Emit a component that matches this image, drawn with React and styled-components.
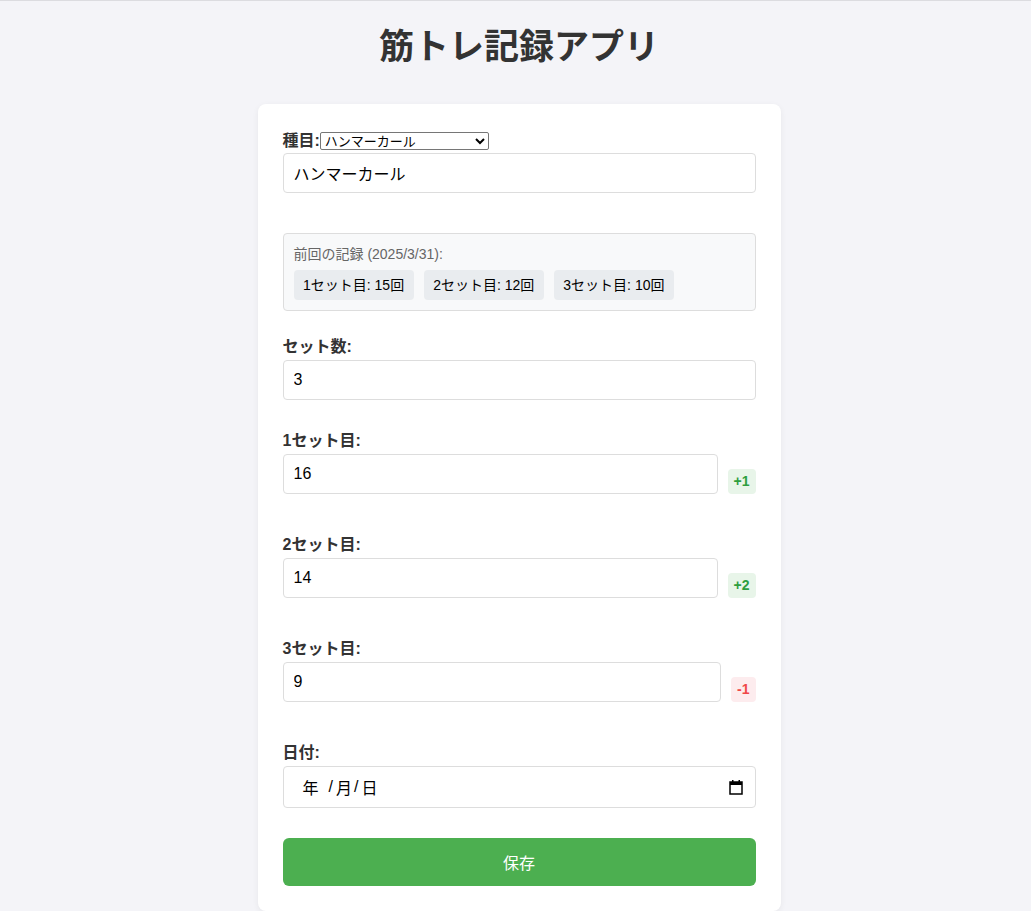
import React from 'react'
import styled, { createGlobalStyle } from 'styled-components'

const GlobalStyle = createGlobalStyle`
  html, body {
    margin: 0;
    padding: 0;
    background: #f4f4f8;
  }
  body {
    border-top: 1px solid #dcdce0;
    font-family: "Liberation Sans", Arial, "Noto Sans CJK JP", sans-serif;
    color: #333;
  }
`

const Page = styled.div`
  padding: 0 0 0 7px;
`

const Title = styled.h1`
  margin: 25px 0 36px;
  text-align: center;
  font-size: 35px;
  font-weight: 700;
  line-height: 42px;
  color: #333;
`

const Card = styled.div`
  width: 473px;
  margin: 0 auto;
  padding: 25px;
  background: #fff;
  border-radius: 8px;
  box-shadow: 0 2px 6px rgba(0, 0, 0, 0.06);
`

const Group = styled.div`
  margin-bottom: ${(p) => p.$mb || 15}px;
`

const Label = styled.label`
  display: block;
  font-size: 16px;
  font-weight: 700;
  line-height: 18px;
  margin-bottom: 4px;
  color: #333;
`

const InlineLabel = styled.label`
  display: flex;
  align-items: center;
  font-size: 16px;
  font-weight: 700;
  line-height: 18px;
  margin: 3px 0 3px;
`

const Select = styled.select`
  font-family: "Liberation Sans", Arial, "Noto Sans CJK JP", sans-serif;
  font-size: 13px;
  width: 169px;
  height: 18px;
  padding: 0;
  margin: 0;
  border: 1px solid #767676;
  border-radius: 2px;
  background: #fff;
  color: #000;
`

const Input = styled.input`
  display: block;
  box-sizing: border-box;
  width: 100%;
  height: 40px;
  padding: 0 10px;
  border: 1px solid #ddd;
  border-radius: 4px;
  font-family: "Liberation Sans", Arial, "Noto Sans CJK JP", sans-serif;
  font-size: 16px;
  color: #000;
  background: #fff;
  margin-bottom: 15px;
  outline: none;
  -moz-appearance: textfield;
  &::-webkit-inner-spin-button,
  &::-webkit-outer-spin-button {
    -webkit-appearance: none;
    margin: 0;
  }
`

const Row = styled.div`
  display: flex;
  align-items: center;
`

const RowInput = styled(Input)`
  flex: 1;
  width: auto;
  min-width: 0;
`

const Diff = styled.span`
  margin-left: 10px;
  padding: 0 6px;
  height: 25px;
  line-height: 25px;
  border-radius: 4px;
  font-size: 14px;
  font-weight: 700;
  background: ${(p) => (p.$up ? '#e8f5e9' : '#fdecee')};
  color: ${(p) => (p.$up ? '#2e9e3e' : '#f04848')};
`

const History = styled.div`
  background: #f8f9fa;
  border: 1px solid #ddd;
  border-radius: 4px;
  padding: 10px;
  margin: 40px 0 27px;
`

const HistoryTitle = styled.div`
  font-size: 14px;
  line-height: 20px;
  color: #666;
  margin-bottom: 6px;
`

const Chips = styled.div`
  display: flex;
  gap: 10px;
`

const Chip = styled.span`
  background: #e9ecef;
  border-radius: 4px;
  padding: 0 9.5px;
  height: 30px;
  line-height: 30px;
  font-size: 14px;
  color: #000;
`

const DateField = styled.div`
  box-sizing: border-box;
  height: 42px;
  display: flex;
  align-items: center;
  padding: 0 12px 0 19px;
  border: 1px solid #ddd;
  border-radius: 4px;
  font-size: 16px;
  color: #000;
  margin-bottom: 30px;
`

const DatePart = styled.span`
  min-width: ${(p) => p.$w || 0}px;
`

const DateSep = styled.span`
  padding: 0 ${(p) => p.$pr || 2}px 0 ${(p) => p.$pl || 0}px;
`

const CalendarSlot = styled.span`
  margin-left: auto;
  display: flex;
`

const SaveButton = styled.button`
  display: block;
  width: 100%;
  height: 48px;
  border: none;
  border-radius: 6px;
  background: #4caf50;
  color: #fff;
  font-family: "Liberation Sans", Arial, "Noto Sans CJK JP", sans-serif;
  font-size: 16px;
  cursor: pointer;
`

const CalendarIcon = () => (
  <svg width="14" height="16" viewBox="0 0 14 16">
    <rect x="1" y="3" width="12" height="12" fill="none" stroke="#000" strokeWidth="1.5" />
    <rect x="1" y="3" width="12" height="3" fill="#000" />
    <rect x="3" y="1" width="1.5" height="3" fill="#000" />
    <rect x="9.5" y="1" width="1.5" height="3" fill="#000" />
  </svg>
)

const previous = [15, 12, 10]
const sets = [
  { value: 16, diff: '+1', up: true },
  { value: 14, diff: '+2', up: true },
  { value: 9, diff: '-1', up: false },
]

export default function App() {
  return (
    <Page>
      <GlobalStyle />
      <Title>筋トレ記録アプリ</Title>
      <Card>
        <InlineLabel>
          種目:
          <Select defaultValue="ハンマーカール">
            <option>ハンマーカール</option>
            <option>ベンチプレス</option>
            <option>スクワット</option>
          </Select>
        </InlineLabel>
        <Input type="text" defaultValue="ハンマーカール" />

        <History>
          <HistoryTitle>前回の記録 (2025/3/31):</HistoryTitle>
          <Chips>
            {previous.map((n, i) => (
              <Chip key={i}>
                {i + 1}セット目: {n}回
              </Chip>
            ))}
          </Chips>
        </History>

        <Group $mb={32}>
          <Label>セット数:</Label>
          <Input type="number" defaultValue={3} />
        </Group>

        {sets.map((s, i) => (
          <Group key={i} $mb={27}>
            <Label>{i + 1}セット目:</Label>
            <Row>
              <RowInput type="number" defaultValue={s.value} />
              <Diff $up={s.up}>{s.diff}</Diff>
            </Row>
          </Group>
        ))}

        <Group>
          <Label>日付:</Label>
          <DateField>
            <DatePart $w={26}>年</DatePart>
            <DateSep $pr={3}>/</DateSep>
            <DatePart>月</DatePart>
            <DateSep $pl={2} $pr={3}>/</DateSep>
            <DatePart>日</DatePart>
            <CalendarSlot>
              <CalendarIcon />
            </CalendarSlot>
          </DateField>
        </Group>

        <SaveButton>保存</SaveButton>
      </Card>
    </Page>
  )
}
